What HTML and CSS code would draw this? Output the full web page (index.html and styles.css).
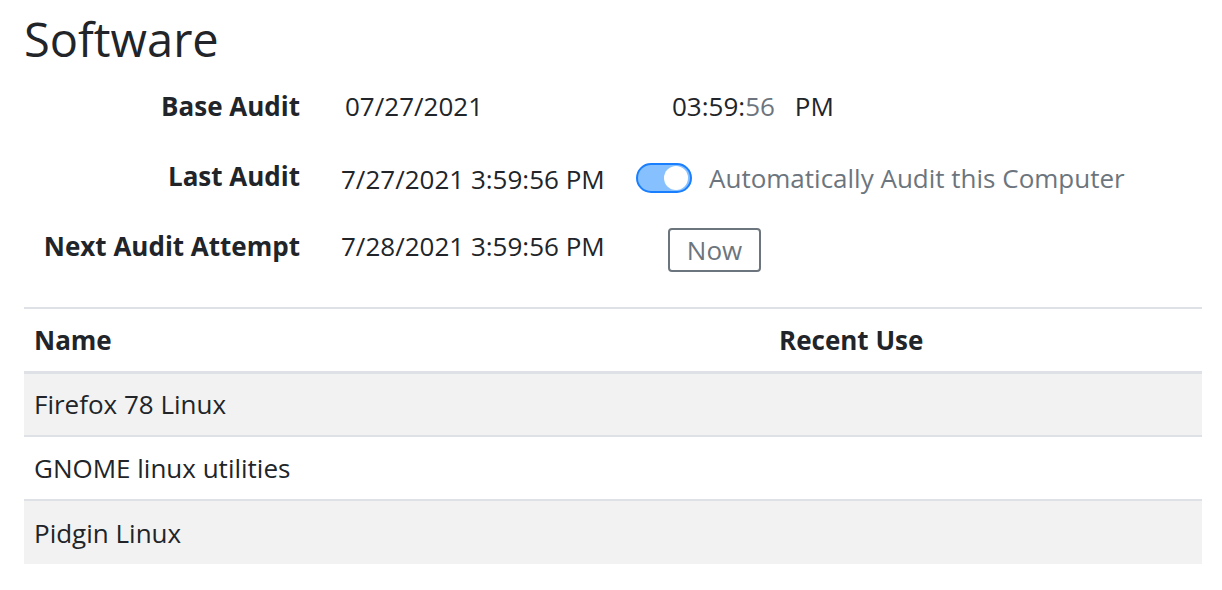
FILE: index.html
```html
<!DOCTYPE html>
<html lang="en">
<head>
<meta charset="utf-8">
<title>Software</title>
<link rel="stylesheet" href="styles.css">
</head>
<body>
<div class="page">
  <h2 class="title">Software</h2>
  <div class="audit">
    <div class="row">
      <div class="label">Base Audit</div>
      <div class="value date">07/27/2021</div>
      <div class="extra time">03:59:<span class="muted">56</span><span class="ampm">PM</span></div>
    </div>
    <div class="row">
      <div class="label">Last Audit</div>
      <div class="value shift">7/27/2021 3:59:56 PM</div>
      <div class="extra">
        <span class="switch"><span class="knob"></span></span>
        <span class="switch-label">Automatically Audit this Computer</span>
      </div>
    </div>
    <div class="row">
      <div class="label">Next Audit Attempt</div>
      <div class="value">7/28/2021 3:59:56 PM</div>
      <div class="extra"><button class="btn">Now</button></div>
    </div>
  </div>
  <table class="table">
    <colgroup><col class="c1"><col class="c2"></colgroup>
    <thead>
      <tr><th>Name</th><th>Recent Use</th></tr>
    </thead>
    <tbody>
      <tr class="odd"><td>Firefox 78 Linux</td><td></td></tr>
      <tr><td>GNOME linux utilities</td><td></td></tr>
      <tr class="odd"><td>Pidgin Linux</td><td></td></tr>
    </tbody>
  </table>
</div>
</body>
</html>
```
FILE: styles.css
```css
* { box-sizing: border-box; }
html, body { margin: 0; padding: 0; background: #fff; }
body {
  font-family: "Open Sans", "Noto Sans", sans-serif;
  font-size: 26px;
  color: #212529;
}
.page { padding: 0 20px 0 24px; }
.title {
  margin: 0;
  padding-top: 10px;
  font-size: 47px;
  font-weight: 500;
  line-height: 58px;
}
.audit { padding-top: 3px; padding-bottom: 26px; }
.row {
  display: grid;
  grid-template-columns: 317px 295px 1fr;
  align-items: center;
  height: 70px;
}
.label {
  text-align: right;
  padding-right: 41px;
  font-weight: 700;
}
.value.date { padding-left: 4px; }
.value.shift { padding-top: 5px; }
.time { padding-left: 36px; }
.ampm { margin-left: 20px; }
.muted { color: #6c757d; }
.extra { display: flex; align-items: center; }
.switch {
  position: relative;
  display: inline-block;
  width: 56px;
  height: 30px;
  border: 2px solid #1a7fff;
  border-radius: 15px;
  background: #86c0ff;
  margin-top: 3px;
}
.knob {
  position: absolute;
  right: 2px;
  top: 1px;
  width: 24px;
  height: 24px;
  border-radius: 50%;
  background: #fff;
}
.switch-label { color: #6c757d; margin-left: 17px; margin-top: 4px; }
.btn {
  margin-left: 32px;
  margin-top: 8px;
  font-family: inherit;
  font-size: 26px;
  line-height: 30px;
  color: #6c757d;
  background: #fff;
  border: 2px solid #6c757d;
  border-radius: 4px;
  padding: 4px 0;
  height: 44px;
  width: 93px;
}
.table {
  width: 100%;
  border-collapse: collapse;
}
.c1 { width: 745px; }
.table th, .table td {
  text-align: left;
  padding: 0 10px;
  height: 64px;
  vertical-align: middle;
}
.table th {
  font-weight: 700;
  height: 64px;
  border-top: 2px solid #dee2e6;
  border-bottom: 3px solid #dee2e6;
  padding-top: 1px;
}
.table td { border-top: 2px solid #dee2e6; }
.table tbody tr:first-child td { border-top: none; }
.table tr.odd td { background: #f2f2f2; }
```
